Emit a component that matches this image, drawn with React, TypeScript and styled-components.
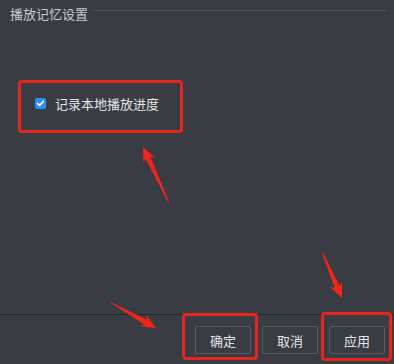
import React from "react";
import styled, { createGlobalStyle } from "styled-components";

const Global = createGlobalStyle`
  html, body { margin: 0; padding: 0; background: #393c43; }
  body { font-family: "Noto Sans CJK SC", "Noto Sans", sans-serif; }
`;

const Page = styled.div`
  position: relative;
  width: 394px;
  height: 364px;
  background: #393c43;
  display: flex;
  flex-direction: column;
  overflow: hidden;
  color: #d6d7d9;
`;

const Header = styled.div`
  display: flex;
  align-items: center;
  gap: 5px;
  padding: 3px 8px 0 10px;
  height: 20px;
`;

const Title = styled.span`
  font-size: 13px;
  line-height: 20px;
  color: #c9cacc;
  white-space: nowrap;
  margin-top: 2px;
`;

const Rule = styled.div`
  flex: 1;
  height: 1px;
  background: #50535a;
  margin-top: -5px;
`;

const Body = styled.div`
  flex: 1;
  padding: 70px 0 0 35px;
`;

const Row = styled.label`
  display: flex;
  align-items: center;
  gap: 9px;
  font-size: 13px;
  color: #e2e3e5;
  height: 20px;
`;

const Box = styled.span`
  width: 11px;
  height: 11px;
  border-radius: 2px;
  background: #2f8ef2;
  display: flex;
  align-items: center;
  justify-content: center;
`;

const Footer = styled.div`
  border-top: 1px solid #26282c;
  height: 50px;
  display: flex;
  justify-content: flex-end;
  align-items: flex-start;
  gap: 11px;
  padding: 11px 9px 0 0;
  box-sizing: border-box;
`;

const Button = styled.button`
  width: 56px;
  height: 28px;
  background: #393c43;
  border: 1px solid #595c62;
  border-radius: 2px;
  color: #e4e5e7;
  font-family: "Noto Sans CJK SC", "Noto Sans", sans-serif;
  font-size: 13px;
  padding: 0;
`;

const Mark = styled.div<{ $x: number; $y: number; $w: number; $h: number }>`
  position: absolute;
  left: ${(p) => p.$x}px;
  top: ${(p) => p.$y}px;
  width: ${(p) => p.$w}px;
  height: ${(p) => p.$h}px;
  border: 3px solid #e5261e;
  border-radius: 4px;
  box-sizing: border-box;
  pointer-events: none;
`;

const Overlay = styled.svg`
  position: absolute;
  left: 0;
  top: 0;
  pointer-events: none;
`;

function arrowPoints(tx: number, ty: number, px: number, py: number) {
  const dx = px - tx;
  const dy = py - ty;
  const L = Math.hypot(dx, dy);
  const ux = dx / L;
  const uy = dy / L;
  const nx = -uy;
  const ny = ux;
  const head = 15;
  const hw = 6.5;
  const sw = 2.6;
  const tw = 0.4;
  const bx = px - ux * head;
  const by = py - uy * head;
  const sx = px - ux * (head - 3);
  const sy = py - uy * (head - 3);
  const pts = [
    [tx + nx * tw, ty + ny * tw],
    [sx + nx * sw, sy + ny * sw],
    [bx + nx * hw, by + ny * hw],
    [px, py],
    [bx - nx * hw, by - ny * hw],
    [sx - nx * sw, sy - ny * sw],
    [tx - nx * tw, ty - ny * tw],
  ];
  return pts.map((p) => p.map((v) => v.toFixed(1)).join(",")).join(" ");
}

const arrows = [
  [169, 203, 143, 147],
  [110, 302, 156, 328],
  [322, 252, 342, 298],
];

export default function App() {
  return (
    <Page>
      <Global />
      <Header>
        <Title>播放记忆设置</Title>
        <Rule />
      </Header>
      <Body>
        <Row>
          <Box>
            <svg width="9" height="9" viewBox="0 0 9 9">
              <path d="M1.6 4.6 L3.6 6.5 L7.4 2.4" fill="none" stroke="#fff" strokeWidth="1.6" strokeLinecap="round" strokeLinejoin="round" />
            </svg>
          </Box>
          记录本地播放进度
        </Row>
      </Body>
      <Footer>
        <Button>确定</Button>
        <Button>取消</Button>
        <Button>应用</Button>
      </Footer>
      <Mark $x={18} $y={80} $w={165} $h={53} />
      <Mark $x={182} $y={313} $w={76} $h={47} />
      <Mark $x={321} $y={312} $w={71} $h={49} />
      <Overlay width={394} height={364} viewBox="0 0 394 364">
        {arrows.map((a, i) => (
          <polygon key={i} points={arrowPoints(a[0], a[1], a[2], a[3])} fill="#f0261c" />
        ))}
      </Overlay>
    </Page>
  );
}
